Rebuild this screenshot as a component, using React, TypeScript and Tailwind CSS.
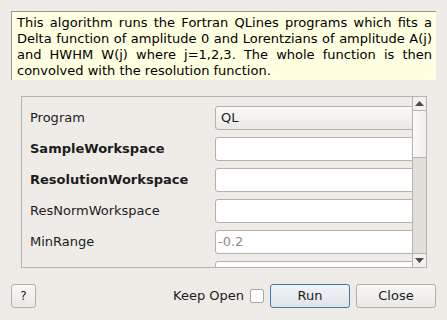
import React from "react";

const font = { fontFamily: '"DejaVu Sans", Verdana, sans-serif' };

function Row({ label, bold, children }: { label?: string; bold?: boolean; children: React.ReactNode }) {
  return (
    <div className="flex h-[24px] shrink-0 items-center">
      <div className={`w-[193px] shrink-0 pl-[8px] text-[13px] text-[#1c1c1c] ${bold ? "font-bold" : ""}`}>{label}</div>
      {children}
    </div>
  );
}

function TextBox({ placeholder }: { placeholder?: string }) {
  return (
    <div className="flex h-[24px] w-[230px] shrink-0 items-center rounded-[3px] border border-[#b4b0ab] bg-white pl-[2px] text-[13px] text-[#8c8c8c]">
      {placeholder}
    </div>
  );
}

export default function App() {
  return (
    <div className="flex h-[320px] w-[447px] flex-col bg-[#efebe7] text-[13px] text-[#1c1c1c]" style={font}>
      <div className="ml-[11px] mt-[11px] h-[69px] w-[425px] border-l border-t border-[#9a9894] bg-[#ffffe1] pl-[5px] pr-[4px] pt-[3px] text-justify text-[13px] leading-[16px] text-black">
        This algorithm runs the Fortran QLines programs which fits a Delta function of amplitude 0 and Lorentzians of amplitude A(j) and HWHM W(j) where j=1,2,3. The whole function is then convolved with the resolution function.
      </div>

      <div className="ml-[21px] mt-[16px] flex h-[172px] w-[406px] border border-[#b7b3ae] bg-[#efebe7]">
        <div className="flex min-w-0 flex-1 flex-col gap-[7px] overflow-hidden pt-[9px]">
          <Row label="Program">
            <div className="flex h-[24px] w-[230px] shrink-0 items-center rounded-[3px] border border-[#b4b0ab] bg-gradient-to-b from-[#fbfaf9] to-[#eae8e5] pl-[5px] text-[13px] text-[#1c1c1c]">
              QL
            </div>
          </Row>
          <Row label="SampleWorkspace" bold>
            <TextBox />
          </Row>
          <Row label="ResolutionWorkspace" bold>
            <TextBox />
          </Row>
          <Row label="ResNormWorkspace">
            <TextBox />
          </Row>
          <Row label="MinRange">
            <TextBox placeholder="-0.2" />
          </Row>
          <Row>
            <TextBox />
          </Row>
        </div>
        <div className="flex w-[14px] shrink-0 flex-col border-l border-[#b7b3ae] bg-[#e2dfdb]">
          <div className="flex h-[14px] shrink-0 items-center justify-center border-b border-[#b7b3ae] bg-[#f3f1ef]">
            <svg width="9" height="5" viewBox="0 0 9 5"><path d="M4.5 0 L9 5 L0 5 Z" fill="#4a4a4a" /></svg>
          </div>
          <div className="h-[47px] shrink-0 border-b border-[#b7b3ae] bg-gradient-to-r from-[#fbfaf9] to-[#f1efec]" />
          <div className="flex-1" />
          <div className="flex h-[14px] shrink-0 items-center justify-center border-t border-[#b7b3ae] bg-[#f3f1ef]">
            <svg width="9" height="5" viewBox="0 0 9 5"><path d="M0 0 L9 0 L4.5 5 Z" fill="#4a4a4a" /></svg>
          </div>
        </div>
      </div>

      <div className="mt-[16px] flex h-[24px] items-center pl-[11px] pr-[11px]">
        <div className="flex h-[24px] w-[25px] items-center justify-center rounded-[3px] border border-[#b4b0ab] bg-gradient-to-b from-[#f8f7f6] to-[#ebe9e6] text-[12px]">
          ?
        </div>
        <div className="flex-1" />
        <span className="text-[13px]">Keep Open</span>
        <div className="ml-[6px] h-[14px] w-[14px] rounded-[2px] border border-[#a9a5a0] bg-white" />
        <div className="ml-[6px] flex h-[24px] w-[80px] items-center justify-center rounded-[3px] border border-[#3b7cb0] bg-gradient-to-b from-[#f2f4f6] to-[#dfe4e9] text-[13px]">
          Run
        </div>
        <div className="ml-[6px] flex h-[24px] w-[80px] items-center justify-center rounded-[3px] border border-[#b4b0ab] bg-gradient-to-b from-[#f8f7f6] to-[#ebe9e6] text-[13px]">
          Close
        </div>
      </div>
    </div>
  );
}
